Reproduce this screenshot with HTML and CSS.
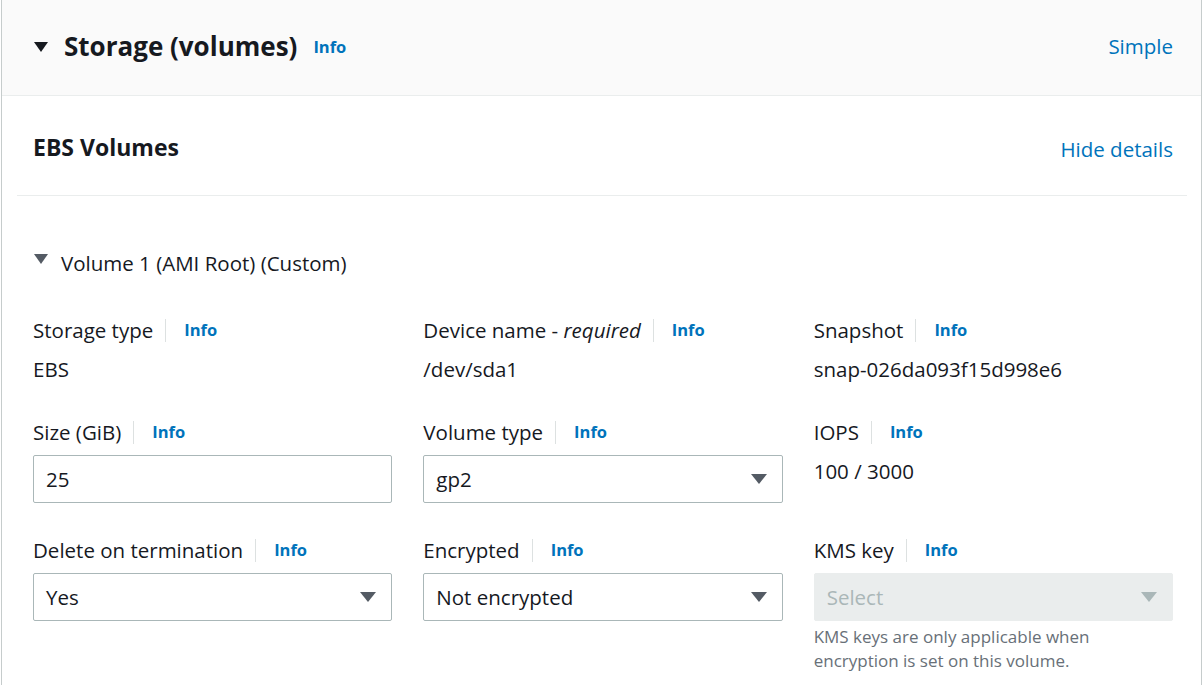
FILE: index.html
```html
<!DOCTYPE html>
<html lang="en">
<head>
<meta charset="utf-8">
<title>Storage (volumes)</title>
<link rel="stylesheet" href="styles.css">
</head>
<body>
<div class="panel">
  <div class="panel-header">
    <div class="panel-title">
      <svg class="caret-big" viewBox="0 0 16 12" width="16" height="12"><polygon points="1,1 15,1 8,11" fill="#16191f"/></svg>
      <h2>Storage (volumes)</h2>
      <a class="info">Info</a>
    </div>
    <a class="link simple">Simple</a>
  </div>
  <div class="panel-body">
    <div class="ebs-header">
      <h3>EBS Volumes</h3>
      <a class="link">Hide details</a>
    </div>
    <div class="volume">
      <div class="volume-title">
        <svg class="caret-vol" viewBox="0 0 16 12" width="16" height="12"><polygon points="1,1 15,1 8,11" fill="#545b64"/></svg>
        <span>Volume 1 (AMI Root) (Custom)</span>
      </div>
      <div class="fields">
        <div class="field">
          <div class="label"><span>Storage type</span><i class="sep"></i><a class="info">Info</a></div>
          <div class="value">EBS</div>
        </div>
        <div class="field">
          <div class="label"><span>Device name - <em>required</em></span><i class="sep"></i><a class="info">Info</a></div>
          <div class="value">/dev/sda1</div>
        </div>
        <div class="field">
          <div class="label"><span>Snapshot</span><i class="sep"></i><a class="info">Info</a></div>
          <div class="value">snap-026da093f15d998e6</div>
        </div>

        <div class="field">
          <div class="label"><span>Size (GiB)</span><i class="sep"></i><a class="info">Info</a></div>
          <div class="input">25</div>
        </div>
        <div class="field">
          <div class="label"><span>Volume type</span><i class="sep"></i><a class="info">Info</a></div>
          <div class="input select"><span>gp2</span><svg class="dd" viewBox="0 0 16 10" width="16" height="10"><polygon points="0,0 16,0 8,10"/></svg></div>
        </div>
        <div class="field">
          <div class="label"><span>IOPS</span><i class="sep"></i><a class="info">Info</a></div>
          <div class="value">100 / 3000</div>
        </div>

        <div class="field">
          <div class="label"><span>Delete on termination</span><i class="sep"></i><a class="info">Info</a></div>
          <div class="input select"><span>Yes</span><svg class="dd" viewBox="0 0 16 10" width="16" height="10"><polygon points="0,0 16,0 8,10"/></svg></div>
        </div>
        <div class="field">
          <div class="label"><span>Encrypted</span><i class="sep"></i><a class="info">Info</a></div>
          <div class="input select"><span>Not encrypted</span><svg class="dd" viewBox="0 0 16 10" width="16" height="10"><polygon points="0,0 16,0 8,10"/></svg></div>
        </div>
        <div class="field">
          <div class="label"><span>KMS key</span><i class="sep"></i><a class="info">Info</a></div>
          <div class="input select disabled"><span>Select</span><svg class="dd" viewBox="0 0 16 10" width="16" height="10"><polygon points="0,0 16,0 8,10"/></svg></div>
          <div class="hint">KMS keys are only applicable when encryption is set on this volume.</div>
        </div>
      </div>
    </div>
  </div>
</div>
</body>
</html>
```

FILE: styles.css
```css
* { box-sizing: border-box; }
html, body { margin: 0; padding: 0; background: #ffffff; }
body {
  font-family: "Open Sans", "Noto Sans", sans-serif;
  font-size: 20.5px;
  color: #16191f;
  overflow: hidden;
  height: 685px;
}
a { cursor: pointer; }
.panel {
  margin-left: 1px;
  width: 1201px;
  height: 685px;
  border-left: 1px solid #c6cccc;
  border-right: 1px solid #c6cccc;
}
.panel-header {
  height: 96px;
  background: #fafafa;
  border-bottom: 1px solid #eaeded;
  display: flex;
  align-items: center;
  justify-content: space-between;
  padding: 0 28px 0 31px;
}
.panel-title { display: flex; align-items: center; }
.caret-big { display: block; margin-right: 15px; margin-top: -2px; }
h2 {
  margin: 0;
  font-size: 26px;
  font-weight: 700;
  line-height: 36px;
  margin-top: -4px;
}
.panel-title .info { margin-left: 16px; margin-top: -3px; }
.link { color: #0073bb; font-size: 20.5px; }
.simple { margin-top: -4px; }
.info {
  color: #0073bb;
  font-weight: 700;
  font-size: 16.5px;
}
.panel-body { padding: 0 14px 0 15px; }
.ebs-header {
  height: 100px;
  border-bottom: 1px solid #eaeded;
  display: flex;
  align-items: center;
  justify-content: space-between;
  padding: 0 14px 0 16px;
}
h3 {
  margin: 0;
  font-size: 23px;
  font-weight: 700;
  margin-top: 3px;
}
.ebs-header .link { margin-top: 7px; }
.volume { padding: 52px 14px 0 16px; }
.volume-title {
  display: flex;
  align-items: center;
  line-height: 30px;
  height: 30px;
}
.caret-vol { margin-right: 12px; margin-top: -9px; }
.fields {
  margin-top: 37px;
  display: grid;
  grid-template-columns: repeat(3, 1fr);
  column-gap: 31px;
  row-gap: 32px;
}
.field { display: flex; flex-direction: column; }
.label {
  display: flex;
  align-items: center;
  height: 30px;
  line-height: 30px;
}
.label em { font-style: italic; }
.sep {
  width: 1px;
  height: 23px;
  background: #dde1e1;
  margin: 0 18px 0 12px;
}
.value {
  margin-top: 8px;
  line-height: 32px;
  height: 32px;
}
.input {
  margin-top: 8px;
  height: 48px;
  border: 1px solid #aab7b8;
  border-radius: 2px;
  padding: 0 15px 0 12px;
  display: flex;
  align-items: center;
  justify-content: space-between;
}
.dd { fill: #545b64; display: block; }
.disabled { background: #eaeded; border-color: #eaeded; color: #aab7b8; }
.disabled .dd { fill: #aab7b8; }
.hint {
  margin-top: 4px;
  font-size: 17px;
  line-height: 24px;
  color: #687078;
}
```
